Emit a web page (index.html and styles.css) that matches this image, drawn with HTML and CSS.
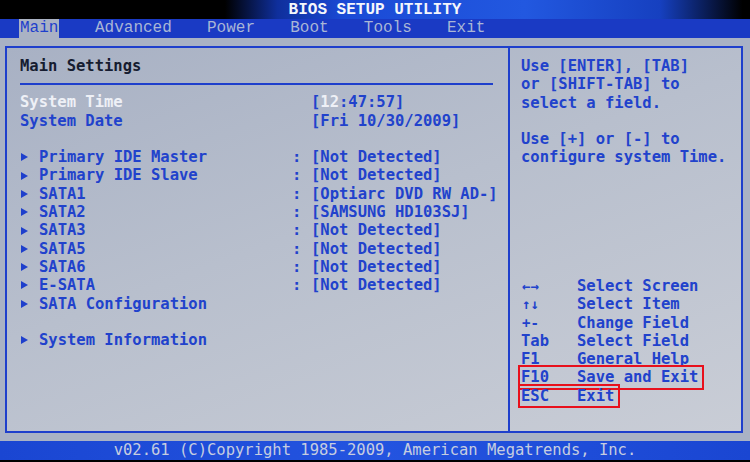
FILE: index.html
```html
<!DOCTYPE html>
<html lang="en">
<head>
    <meta charset="UTF-8">
    <title>BIOS Setup Utility</title>
    <link rel="stylesheet" href="styles.css">
</head>
<body>
    <div class="bios">
        <div class="title-bar">BIOS SETUP UTILITY</div>
        <div class="menu-bar">
            <span class="menu-item active">Main</span>
            <span class="menu-item">Advanced</span>
            <span class="menu-item">Power</span>
            <span class="menu-item">Boot</span>
            <span class="menu-item">Tools</span>
            <span class="menu-item">Exit</span>
        </div>
        <div class="screen">
            <div class="panel">
                <div class="settings">
                    <div class="section-title">Main Settings</div>
                    <div class="row plain selected">
                        <span class="label">System Time</span>
                        <span class="value">[<span class="hl">12</span>:47:57]</span>
                    </div>
                    <div class="row plain">
                        <span class="label">System Date</span>
                        <span class="value">[Fri 10/30/2009]</span>
                    </div>
                    <div class="row blank"></div>
                    <div class="row"><span class="arrow"></span><span class="label">Primary IDE Master</span><span class="colon">:</span><span class="value">[Not Detected]</span></div>
                    <div class="row"><span class="arrow"></span><span class="label">Primary IDE Slave</span><span class="colon">:</span><span class="value">[Not Detected]</span></div>
                    <div class="row"><span class="arrow"></span><span class="label">SATA1</span><span class="colon">:</span><span class="value">[Optiarc DVD RW AD-]</span></div>
                    <div class="row"><span class="arrow"></span><span class="label">SATA2</span><span class="colon">:</span><span class="value">[SAMSUNG HD103SJ]</span></div>
                    <div class="row"><span class="arrow"></span><span class="label">SATA3</span><span class="colon">:</span><span class="value">[Not Detected]</span></div>
                    <div class="row"><span class="arrow"></span><span class="label">SATA5</span><span class="colon">:</span><span class="value">[Not Detected]</span></div>
                    <div class="row"><span class="arrow"></span><span class="label">SATA6</span><span class="colon">:</span><span class="value">[Not Detected]</span></div>
                    <div class="row"><span class="arrow"></span><span class="label">E-SATA</span><span class="colon">:</span><span class="value">[Not Detected]</span></div>
                    <div class="row"><span class="arrow"></span><span class="label">SATA Configuration</span></div>
                    <div class="row blank"></div>
                    <div class="row"><span class="arrow"></span><span class="label">System Information</span></div>
                </div>
                <div class="help">
                    <div class="help-text">
                        <div>Use [ENTER], [TAB]</div>
                        <div>or [SHIFT-TAB] to</div>
                        <div>select a field.</div>
                        <div class="blank"></div>
                        <div>Use [+] or [-] to</div>
                        <div>configure system Time.</div>
                    </div>
                    <div class="keys">
                        <div class="key-row"><span class="key small">&larr;&rarr;</span><span>Select Screen</span></div>
                        <div class="key-row"><span class="key small">&uarr;&darr;</span><span>Select Item</span></div>
                        <div class="key-row"><span class="key small">+-</span><span>Change Field</span></div>
                        <div class="key-row"><span class="key">Tab</span><span>Select Field</span></div>
                        <div class="key-row"><span class="key">F1</span><span>General Help</span></div>
                        <div class="key-row"><span class="boxed"><span class="key">F10</span><span>Save and Exit</span></span></div>
                        <div class="key-row"><span class="boxed"><span class="key">ESC</span><span>Exit</span></span></div>
                    </div>
                </div>
            </div>
        </div>
        <div class="footer">v02.61 (C)Copyright 1985-2009, American Megatrends, Inc.</div>
    </div>
</body>
</html>
```

FILE: styles.css
```css
body{
    margin:0;
    padding:0;
    background:#000;
}

.bios{
    width:750px;
    height:462px;
    overflow:hidden;
    font-family: "DejaVu Sans Mono", monospace;
    font-size:15.5px;
    font-weight:bold;
    color:#2142cc;
}

.title-bar{
    height:19px;
    line-height:20px;
    text-align:center;
    font-family: "Liberation Mono", monospace;
    font-size:16px;
    font-weight:bold;
    color:#f4f6fb;
    background: linear-gradient(90deg,#000 0%,#000 30%,#0f2f9c 37%,#1a4ad6 46%,#2258e0 70%,#1640c0 88%,#000 99%);
}

.menu-bar{
    height:19px;
    display:flex;
    gap:35.2px;
    padding-left:20px;
    background:#1a3ac4;
    font-family: "Liberation Mono", monospace;
    font-size:16px;
    font-weight:normal;
    color:#a9b6d6;
    line-height:19px;
}

.menu-item.active{
    padding:0 1px;
    margin:0 0.4px 0 -1px;
    background:#aab2c4;
    color:#1e3fcc;
}

.screen{
    padding:8px 7px 8px 5px;
    background:#a9b2c4;
}

.panel{
    display:flex;
    height:383px;
    border:2px solid #1e3fcc;
    background: linear-gradient(160deg,#a8b1c4 0%,#b8bfcd 45%,#c9cdd6 100%);
}

.settings{
    width:488px;
    padding:9px 0 0 13px;
    border-right:2px solid #1e3fcc;
    line-height:18.3px;
}

.section-title{
    color:#161c30;
    width:473px;
    padding-bottom:8px;
    border-bottom:2px solid #1e3fcc;
    margin-bottom:8px;
}

.row{
    display:grid;
    grid-template-columns:19px 252px 20px auto;
    height:18.3px;
    white-space:pre;
}

.row.plain{
    grid-template-columns:271px 20px auto;
}

.row.plain .value{
    grid-column:3;
}

.selected .label,
.hl{
    color:#eef0f6;
}

.arrow{
    align-self:center;
    width:0;
    height:0;
    margin-left:1px;
    border-left:7px solid #1e3fcc;
    border-top:4px solid transparent;
    border-bottom:4px solid transparent;
}

.colon{
    padding-left:1px;
}

.help{
    flex:1;
    display:flex;
    flex-direction:column;
    padding:9px 0 26px 11px;
    line-height:18.3px;
}

.blank{
    height:18.3px;
}

.keys{
    margin-top:auto;
}

.key-row{
    height:18.3px;
    display:flex;
}

.key{
    width:56px;
    flex:none;
}

.key.small{
    font-size:14px;
    padding-left:1px;
    width:55px;
}

.boxed{
    display:inline-flex;
    padding-right:3px;
    outline:2px solid #e8101c;
    outline-offset:1px;
}

.footer{
    height:19px;
    line-height:19px;
    text-align:center;
    font-weight:normal;
    color:#c6cde0;
    background: linear-gradient(90deg,#1a46d2 0%,#2354e0 50%,#1a46d2 100%);
    border-bottom:3px solid #000;
}
```
